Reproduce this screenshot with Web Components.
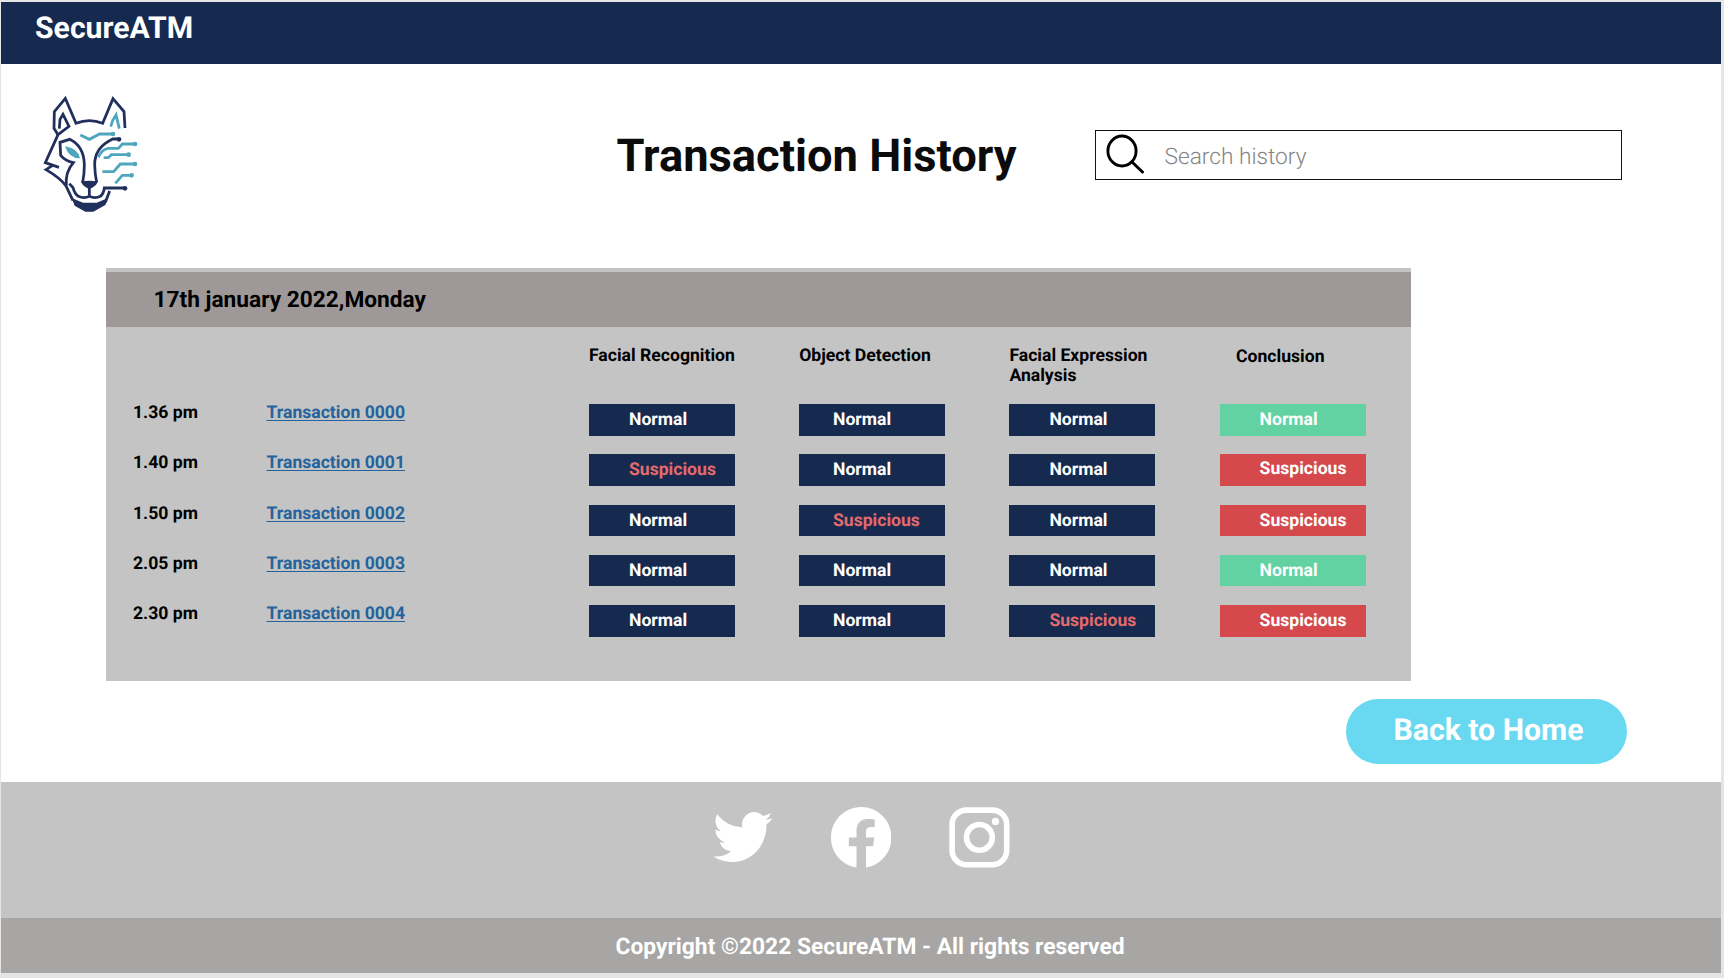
<!DOCTYPE html>
<html lang="en">
<head>
<meta charset="utf-8">
<title>SecureATM</title>
<style>
  html, body { margin: 0; background: #e5e5e5; }
  body { font-family: Roboto, "Liberation Sans", sans-serif; font-weight: 700; color: #000; width: 1724px; height: 978px; overflow: hidden; text-rendering: geometricPrecision; }
</style>
</head>
<body>
<atm-page></atm-page>
<script>
const define = (name, html) => customElements.define(name, class extends HTMLElement {
  connectedCallback() {
    if (this.shadowRoot) return;
    const t = document.createElement('template');
    t.innerHTML = typeof html === 'function' ? html(this) : html;
    this.attachShadow({ mode: 'open' }).append(t.content.cloneNode(true));
  }
});

define('atm-topbar', `
<style>
  :host { display: block; box-sizing: border-box; height: 62px; padding-left: 34px; background: #16294e;
    color: #fff; font-size: 30.2px; line-height: 54px; }
</style><slot></slot>`);

define('wolf-logo', `
<style>:host { display: block; width: 120px; height: 135px; } svg { display: block; }</style>
<svg width="120" height="135" viewBox="0 0 360 405" fill="none" stroke-width="8.3" stroke-linejoin="miter">
  <g stroke="#212f5c">
    <path d="M84 149 72 130 73 80 106 40 138 115Q178 99 218 115L249 41 282 80 285 129"/>
    <path d="M88 131 90 103 99 88 117 124 84 149 46 233 87 247M68 241 48 254Q92 280 108 303L129 347"/>
    <path d="M158 292Q163 268 163 240Q162 183 119 163L90 172 92 211Q105 227 130 233Q105 262 109 302"/>
    <path d="M266 162H248Q193 188 194 240Q195 270 200 292"/>
    <path d="M178 308V335M118 296 129 308Q134 327 145 334Q162 342 178 334Q195 342 211 334Q221 326 223 309H284M239 318 226 352"/>
  </g>
  <g fill="#212f5c">
    <path d="M153 289Q178 285 203 289Q203 302 178 313Q154 302 153 289Z"/>
    <path d="M125 339 159 353H200L234 339 226 360 190 380H166L134 362Z"/>
    <circle cx="267" cy="163" r="7"/><circle cx="285" cy="310" r="7"/>
  </g>
  <g stroke="#4ea6be">
    <path d="M151 150 178 163 209 147H247M242 125 248 107 258 90 268 131M205 217Q216 192 235 190H265L277 177H313M221 218H235L244 209H294M217 260H251L271 237H313M256 295 277 271H303"/>
  </g>
  <g fill="#4ea6be">
    <path d="M105 184Q143 189 150 220Q117 221 105 184Z"/>
    <circle cx="249" cy="147" r="7"/><circle cx="315" cy="177" r="7"/><circle cx="296" cy="209" r="7"/>
    <circle cx="315" cy="237" r="7"/><circle cx="305" cy="271" r="7"/>
  </g>
</svg>`);

define('search-box', `
<style>
  :host { display: flex; box-sizing: border-box; width: 527px; height: 50px; border: 1.5px solid #111; background: #fff;
    font-size: 22.7px; font-weight: 300; line-height: 51px; color: #858585; }
  svg { flex: none; margin: 3px 19.5px 0 10px; }
</style>
<svg width="39" height="40" viewBox="0 0 39 40" fill="none" stroke="#000" stroke-linecap="round">
  <ellipse cx="16" cy="17" rx="14.1" ry="15" stroke-width="2.9"/><path d="M26 28 36.5 38" stroke-width="3"/>
</svg>
<span><slot></slot></span>`);

define('page-hero', `
<style>
  :host { display: flex; height: 204px; align-items: flex-start; }
  wolf-logo { margin: 21px 0 0 29px; }
  h1 { margin: 67px 0 0 466.5px; width: 478.5px; font-size: 45.3px; line-height: 52px; font-weight: 700; color: #0b0b0b; }
  search-box { margin-top: 66px; }
</style>
<wolf-logo></wolf-logo><h1>Transaction History</h1><search-box>Search history</search-box>`);

define('status-badge', `
<style>
  :host { display: block; box-sizing: border-box; height: 31.5px; padding-left: 40px; background: #16294e; color: #fff; line-height: 33px; }
  :host([kind="alert"]) { color: #e36b6e; }
  :host([kind="ok"]) { background: #62d2a2; }
  :host([kind="bad"]) { background: #d5494c; }
  :host([inset]) { padding-left: 33.8px; }
  :host([raised]) { line-height: 31px; }
</style><slot></slot>`);

define('transaction-row', el => {
  const s = el.getAttribute('checks');
  const cell = (bad, i) => `<status-badge ${i === 1 ? 'inset' : ''} ${bad ? 'kind="alert"' : ''}>${bad ? 'Suspicious' : 'Normal'}</status-badge>`;
  const anyBad = s.includes('1');
  return `
<style>
  :host { display: grid; grid-template-columns: var(--columns); height: 31.5px; font-size: 17.6px; }
  .time, a { line-height: 19px; white-space: nowrap; }
  a { margin-left: -.5px; color: #25639d; text-decoration: underline; text-decoration-thickness: 1px; text-underline-offset: 2px; text-decoration-skip-ink: none; justify-self: start; }
  status-badge { width: 146px; }
</style>
<span class="time">${el.getAttribute('time')}</span><a><slot></slot></a>
${[...s].map((c, i) => cell(c === '1', i)).join('')}
<status-badge kind="${anyBad ? 'bad' : 'ok'}" ${s === '100' ? 'raised' : ''}>${anyBad ? 'Suspicious' : 'Normal'}</status-badge>`;
});

define('history-panel', `
<style>
  :host { display: block; box-sizing: border-box; width: 1305px; height: 413px; margin-left: 105px; padding-top: 4px; background: #c4c4c4;
    --columns: 134px 322px 210.2px 210.2px 210.2px 146.4px; }
  h2 { margin: 0; padding-left: 47.5px; height: 55px; background: #9e9998; font-size: 22.7px; font-weight: 700; line-height: 56px; }
  .head { display: grid; grid-template-columns: var(--columns); padding: 19px 0 0 27px; box-sizing: border-box; height: 77px; font-size: 17.6px; line-height: 20px; }
  .head span:first-child { grid-column: 3; }
  .head span:last-child { padding: 1px 0 0 16.5px; }
  .rows { display: flex; flex-direction: column; gap: 18.8px; padding-left: 27px; }
</style>
<h2>17th january 2022,Monday</h2>
<div class="head"><span>Facial Recognition</span><span>Object Detection</span><span>Facial Expression<br>Analysis</span><span>Conclusion</span></div>
<div class="rows">
  <transaction-row time="1.36 pm" checks="000">Transaction 0000</transaction-row>
  <transaction-row time="1.40 pm" checks="100">Transaction 0001</transaction-row>
  <transaction-row time="1.50 pm" checks="010">Transaction 0002</transaction-row>
  <transaction-row time="2.05 pm" checks="000">Transaction 0003</transaction-row>
  <transaction-row time="2.30 pm" checks="001">Transaction 0004</transaction-row>
</div>`);

define('pill-button', `
<style>
  :host { display: block; box-sizing: border-box; width: 281px; height: 65.5px; border-radius: 33px; padding-left: 48px; background: #69d9f2;
    color: #fff; font-size: 30.2px; line-height: 63px; }
</style><slot></slot>`);

define('social-links', `
<style>
  :host { display: flex; box-sizing: border-box; height: 136px; padding: 25px 0 0 711.5px; align-items: flex-start; background: #c4c4c4; }
  svg { display: block; fill: #fff; }
  .tw { margin: 5px 58.5px 0 0; } .fb { margin-right: 57.5px; }
</style>
<svg class="tw" width="59.5" height="50" viewBox="0 2 16 13" preserveAspectRatio="none"><path d="M5.026 15c6.038 0 9.341-5.003 9.341-9.334 0-.14 0-.282-.006-.422A6.685 6.685 0 0 0 16 3.542a6.658 6.658 0 0 1-1.889.518 3.301 3.301 0 0 0 1.447-1.817 6.533 6.533 0 0 1-2.087.793A3.286 3.286 0 0 0 7.875 6.03a9.325 9.325 0 0 1-6.767-3.429 3.289 3.289 0 0 0 1.018 4.382A3.323 3.323 0 0 1 .64 6.575v.045a3.288 3.288 0 0 0 2.632 3.218 3.203 3.203 0 0 1-.865.115 3.23 3.23 0 0 1-.614-.057 3.283 3.283 0 0 0 3.067 2.277A6.588 6.588 0 0 1 .78 13.58a6.32 6.32 0 0 1-.78-.045A9.344 9.344 0 0 0 5.026 15z"/></svg>
<svg class="fb" width="60.5" height="60.5" viewBox="0 0 16 16" preserveAspectRatio="none"><path d="M16 8.049c0-4.446-3.582-8.05-8-8.05C3.58 0-.002 3.603-.002 8.05c0 4.017 2.926 7.347 6.75 7.951v-5.625H4.72V8.05h2.03V6.275c0-2.017 1.195-3.131 3.022-3.131.876 0 1.791.157 1.791.157v1.98h-1.009c-.993 0-1.303.621-1.303 1.258v1.51h2.218l-.354 2.326H9.25V16c3.824-.604 6.75-3.934 6.75-7.951z"/></svg>
<svg width="61" height="61" viewBox="0 0 61 61"><g fill="none" stroke="#fff" stroke-width="5.6"><rect x="3.1" y="3.1" width="54.6" height="54.6" rx="14.5"/><circle cx="30.4" cy="30.4" r="12.9"/></g><circle cx="46.5" cy="14.4" r="3.7"/></svg>`);

define('copyright-bar', `
<style>
  :host { display: block; box-sizing: border-box; height: 55px; padding-left: 614.5px; background: #a7a6a4; color: #fff;
    font-size: 22.8px; font-weight: 700; line-height: 57px; white-space: nowrap; }
</style><slot></slot>`);

define('atm-page', `
<style>
  :host { display: flex; flex-direction: column; width: 1720px; height: 971px; margin: 2px 0 0 1px; background: #fff; }
  pill-button { margin: 17.5px 0 18px 1344.5px; }
</style>
<atm-topbar>SecureATM</atm-topbar>
<page-hero></page-hero>
<history-panel></history-panel>
<pill-button>Back to Home</pill-button>
<social-links></social-links>
<copyright-bar>Copyright ©2022 SecureATM - All rights reserved</copyright-bar>`);
</script>
</body>
</html>
